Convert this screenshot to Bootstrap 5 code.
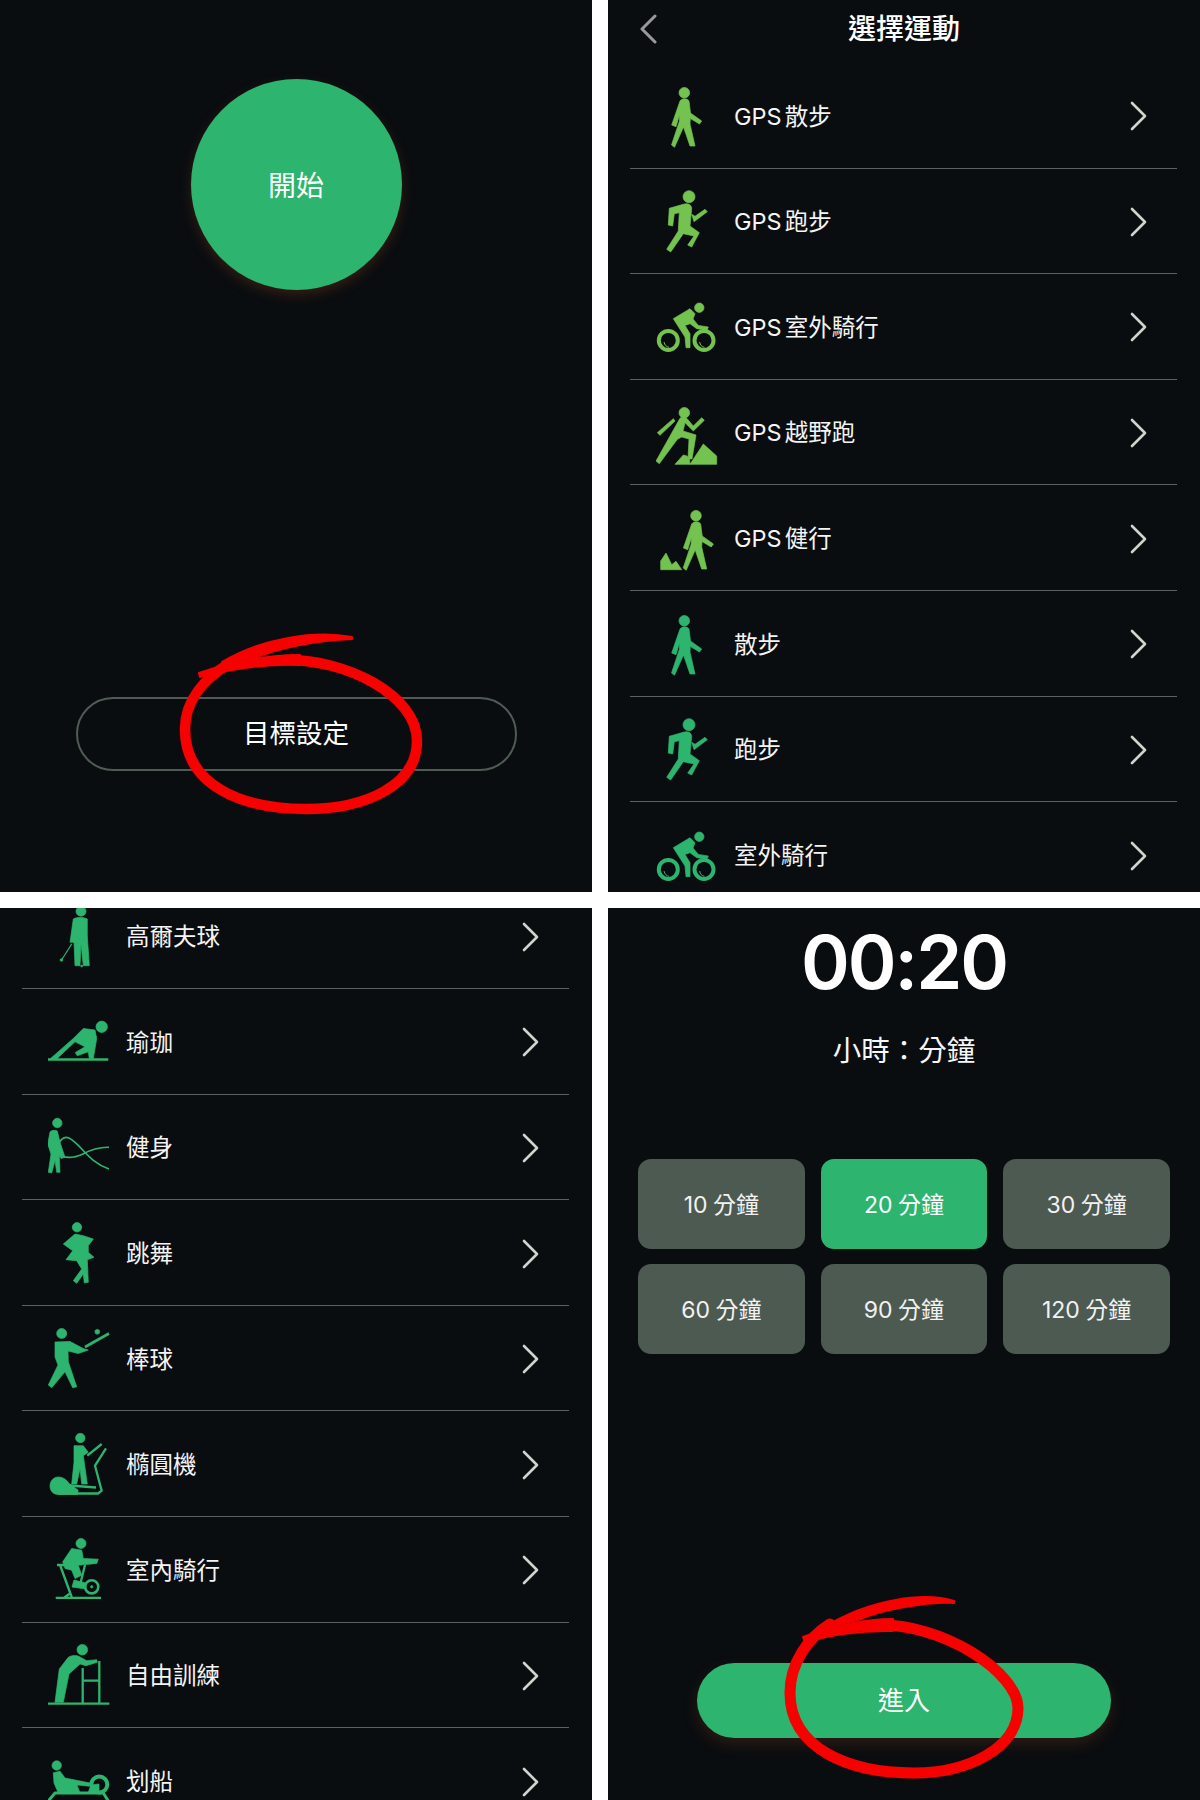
<!DOCTYPE html>
<html lang="zh-Hant">
<head>
<meta charset="utf-8">
<title>選擇運動</title>
<link href="https://cdn.jsdelivr.net/npm/bootstrap@5.3.0/dist/css/bootstrap.min.css" rel="stylesheet">
<style>
body{background:#fff;margin:0;font-family:Inter,"Noto Sans CJK TC",sans-serif}
.sheet{display:grid;grid-template-columns:592px 592px;grid-template-rows:892px 892px;gap:16px;width:1200px;height:1800px}
.phone{background:#0a0d10;color:#f4f4f4;overflow:hidden;position:relative}
.start-disc{width:211px;height:211px;margin:79px auto 0;padding-top:3px;background:#2db46e;color:#fff;font-size:28px;border-radius:50%;box-shadow:0 5px 12px rgba(130,60,30,.35)}
.goal-btn{display:block;width:441px;height:74px;margin:407px auto 0;border:2.5px solid #4f5b54;border-radius:37px;color:#fff;font-size:26.5px;background:transparent;padding:0}
.scribble{position:absolute;top:0;left:0;width:592px;height:892px;pointer-events:none}
.scribble path{fill:none;stroke:#f60000;stroke-linecap:round;stroke-linejoin:round}
.scribble path.sliver{fill:#f60000;stroke-width:2}
.top-head{display:grid;grid-template-columns:1fr auto 1fr;align-items:center;height:58px;margin-bottom:5px;padding:0 32px}
.top-title{font-size:28px;font-weight:500;color:#fff;line-height:1}
.sport-list{margin:0 23px 0 22px;background:transparent;border-radius:0}
.sport-list.shifted{margin-top:-24.5px}
.sport-item{height:105.6px;padding:2px 30px 0 26px;background:transparent;color:#f4f4f4;border:0;border-bottom:1.5px solid #5d6062;font-size:23.5px;gap:14px;word-spacing:-3.5px}
.sport-item.tail{border-bottom:0}
.gps{color:#74c24f}
.plain{color:#2db46e}
.sport-ico{width:64px;height:64px;flex:none;overflow:visible;stroke:currentColor;stroke-width:.7;stroke-linejoin:round}
.chev{width:17px;height:30px;flex:none;fill:none;stroke:#cdd5cd;stroke-width:2.6;stroke-linecap:round;stroke-linejoin:round}
.back-chev{stroke:#999;stroke-width:3}
.clock{margin-top:11px;text-align:center;font-size:74px;font-weight:600;color:#fff;line-height:78px;padding-top:4px;letter-spacing:-2px}
.clock-note{text-align:center;font-size:28.5px;margin-top:30px;line-height:40px;color:#f6f6f6}
.min-grid{display:grid;grid-template-columns:repeat(3,1fr);gap:15px 16px;margin:87.5px 30px 0}
.min-btn{height:90px;background:#4d5a52;color:#f2f2f2;font-size:23px;border:0;border-radius:13px;padding:4px 0 0;word-spacing:-1px}
.min-btn.on{background:#2db46e;color:#fff}
.enter-btn{display:block;width:414px;height:75px;margin:309px auto 0;background:#2db46e;color:#fff;border:0;border-radius:38px;font-size:26px;padding:0;box-shadow:0 6px 14px rgba(130,60,30,.3)}
</style>
</head>
<body>
<svg width="0" height="0" class="position-absolute">
<defs>
<symbol id="i-walk" viewBox="0 0 64 64"><circle cx="28.3" cy="8.7" r="5.3"/><path d="M24 17C26 14 31 14 33 17L34.5 29 45.7 37 43.5 40 34.3 34.5 34 40 39 62H34L27.5 43 18.5 63.3 15.5 61 23.5 37V31L20 42.7 15.7 41Z"/></symbol>
<symbol id="i-run" viewBox="0 0 64 64"><circle cx="33" cy="6.7" r="6"/><path d="M27.3 14.3 13.3 18.3 12.3 35 16.7 36 18.3 23.7 23.3 22.7 22.3 41 10.7 59.3 14.7 62 27.3 43.7 38 46 31.7 55 35.7 57 43.3 42.7 34 36 35.7 18C35 14 31 13 27.3 14.3Z"/><path d="M35.7 24.3 38 31.7 51.3 21.7 49 19.3 39 26.3Z"/></symbol>
<symbol id="i-bike" viewBox="0 0 64 64"><circle cx="43.3" cy="12.7" r="4.7"/><circle cx="12.3" cy="45.4" r="9.5" fill="none" stroke-width="4"/><circle cx="48" cy="45.4" r="9.5" fill="none" stroke-width="4"/><path d="M8 47C8.5 50 10.5 52 13 52.3M43.6 47C44 50 46 52 48.5 52.3" fill="none" stroke-width="1"/><path d="M17.3 23.7 34 13.7 39 18.7 37 24 42.3 30.4 52.3 32 51 35 40.7 33.7 34 28.7 29 30.4 34 38.7V52.7H30L29 42Z"/></symbol>
<symbol id="i-trail" viewBox="0 0 64 64"><circle cx="28.3" cy="11.7" r="5.3"/><path d="M24 17.3 0 60 3.3 62.7 21.3 38.3 25.7 36 33 38 32 58 36 58 40 34 27 30 29 21.7 37.3 30 48.3 19.3 45.7 16.7 37.3 25 30.7 17.3C28 15.5 26 15.5 24 17.3Z"/><path d="M1.3 31.7 4 34.3 19 20 17.3 17.7Z"/><path d="M19 63.3 27.3 54 31 55 33.5 58.5 34 63.3ZM34 63.3 47.3 43 60.7 55V63.3Z"/></symbol>
<symbol id="i-hike" viewBox="0 0 64 64"><circle cx="40" cy="8.7" r="5.3"/><path d="M35.7 17C37.7 14 42.7 14 44.7 17L46.2 29 57.4 37 55.2 40 46 34.5 45.7 40 50.7 62H45.7L39.2 43 30.2 63.3 27.2 61 35.2 37V31L31.7 42.7 27.4 41Z"/><path d="M4.7 62.7V54L10 46 15.7 57.7 20 54.3 25.7 62.7Z"/></symbol>
<symbol id="i-golf" viewBox="0 0 64 64"><circle cx="33" cy="6.3" r="5"/><path d="M25.3 14C28 12 36 12 39.3 14L39.3 30.7 41.3 60.7H35.3L33 39 32 60.7H27L26 37.3H22Z"/><path d="M23.7 39 13.7 54.7" fill="none" stroke-width="1.2"/><circle cx="13.4" cy="55" r="1.3"/><circle cx="33.7" cy="61" r="1"/></symbol>
<symbol id="i-yoga" viewBox="0 0 64 64"><circle cx="53.7" cy="16.8" r="5.7"/><path d="M-.7 49.5H60.3" fill="none" stroke-width="2.4"/><path d="M25.3 28.5 35.3 18.5 47 20 48.7 28.5 45.3 48.5H41.3L40.3 41.8 29.3 45.8 27.3 42.5 37 36.8 27 31.8 8.7 49H2Z"/></symbol>
<symbol id="i-gym" viewBox="0 0 64 64"><circle cx="9.3" cy="7" r="4.7"/><path d="M2 16C3 14 8 14 9.3 15L12 26.3 17 41.3 13 42.5 11.3 39.7 12 56.3H8.7L7 44.7 3.7 57 .3 56.3 3 38-.3 28Z"/><path d="M10.3 28C13 23 17 20 21 22 33 28 40 46 61 53M13.7 39.7C18 42 26 42 35 38 44 33 52 31 61 31.3" fill="none" stroke-width="1.7"/></symbol>
<symbol id="i-dance" viewBox="0 0 64 64"><circle cx="29" cy="5.3" r="4.7"/><path d="M15.3 22 27 12 35.3 13.7 45.3 17 40.3 23.7V30.3L46 35.3 39.3 37.7 40.3 60.3 36.3 61 35.3 52 28.7 61.3 25.3 58.7 33.7 47 28.7 38.7 18 37.7 24.7 28.7Z"/></symbol>
<symbol id="i-base" viewBox="0 0 64 64"><circle cx="13.7" cy="6.5" r="5"/><circle cx="49.3" cy="4.8" r="2.4"/><path d="M37 20 61 6.5" fill="none" stroke-width="2.6"/><path d="M7 15 22 14.5 35.3 21.5 40.3 23 30.3 26.5 20 24 20.3 34.8 28.7 59.8 24.7 60.8 17 44.8 3.7 60.8.3 58 10 38 7 30Z"/></symbol>
<symbol id="i-ellip" viewBox="0 0 64 64"><circle cx="32.3" cy="5" r="4.7"/><path d="M26 12.7 35.3 12.7 40.3 19.3 35.3 22.7 39.3 51H33.7L32 36 28.7 51H23.7L26 29.3Z"/><path d="M53.7 11 39.3 22.7M58 15.3 47 32.7 53.7 57.7 50 60.5H10M22 52.5 48 54.5" fill="none" stroke-width="2.3"/><path d="M10.3 44C15 44 19 47 21 50.5L30 57V61.5H10.3C5.5 61.5 2 58 2 53S5.5 44 10.3 44Z"/></symbol>
<symbol id="i-spin" viewBox="0 0 64 64"><circle cx="33" cy="5.5" r="5"/><path d="M14.7 23.8 23.7 10.5 33.7 12.2 35.3 20.5 50.3 21.2 48.7 25.5 30.3 27.2 33.7 37.2 27 40.5 23.7 32.2 17 30.5Z"/><circle cx="43.7" cy="48.8" r="6.6" fill="none" stroke-width="2.6"/><circle cx="43.7" cy="48.8" r="1.2"/><path d="M7.7 59.8H53M12 27 23.7 59M37 27 32 47M22 55.5 16 59.8M9 27H17" fill="none" stroke-width="2.3"/><path d="M26 42 38 45V51L24 49Z"/></symbol>
<symbol id="i-free" viewBox="0 0 64 64"><circle cx="34.3" cy="5.7" r="5.3"/><path d="M20.3 13.3C24 11 29 11 32 13L38.7 16.7 48.7 15.7 49.3 18.3 38 21.7 32 20 21 30 15.3 58.3H7L11.3 25Z"/><path d="M-.7 59.7H61.3M34.7 24V59M51.3 17V59M34.7 36.7H51.3" fill="none" stroke-width="2.3"/></symbol>
<symbol id="i-row" viewBox="0 0 64 64"><circle cx="8.7" cy="15.5" r="4.7"/><path d="M5.3 22.8 12 21.2 17 28 42 33 41.3 36.2 29 35 32 43H10.3L6 33Z"/><circle cx="51.3" cy="34.5" r="8" fill="none" stroke-width="4"/><path d="M43 35 51 34V43H40Z"/><path d="M.3 51 7 43H55.3L60.3 51" fill="none" stroke-width="3"/></symbol>
<symbol id="i-next" viewBox="0 0 17 30"><path d="M2 2 15 15 2 28"/></symbol>
</defs>
</svg>

<main class="sheet">
  <section class="phone">
    <div class="start-disc d-flex align-items-center justify-content-center">開始</div>
    <button class="btn goal-btn" type="button">目標設定</button>
    <svg class="scribble" viewBox="0 0 592 892" aria-hidden="true">
      <path class="sliver" d="M199 673C225 664 262 655 300 655L300 665C262 663 228 670 200 677Z"/>
      <path stroke-width="10.5" d="M285 660C346 659 417 695 417 741 417 785 366 809 306 809 241 809 185 785 185 729 185 700 205 678 230 663"/>
      <path class="sliver" d="M352 637C315 630 262 638 222 662L248 661C275 648 318 640 352 639Z"/>
    </svg>
  </section>

  <section class="phone">
    <header class="top-head">
      <svg class="chev back-chev" viewBox="0 0 17 30"><path d="M15 2 2 15 15 28"/></svg>
      <div class="top-title">選擇運動</div>
      <span></span>
    </header>
    <div class="list-group list-group-flush sport-list">
      <div class="list-group-item sport-item d-flex align-items-center"><svg class="sport-ico gps" fill="currentColor"><use href="#i-walk"/></svg><span class="flex-grow-1">GPS 散步</span><svg class="chev"><use href="#i-next"/></svg></div>
      <div class="list-group-item sport-item d-flex align-items-center"><svg class="sport-ico gps" fill="currentColor"><use href="#i-run"/></svg><span class="flex-grow-1">GPS 跑步</span><svg class="chev"><use href="#i-next"/></svg></div>
      <div class="list-group-item sport-item d-flex align-items-center"><svg class="sport-ico gps" fill="currentColor"><use href="#i-bike"/></svg><span class="flex-grow-1">GPS 室外騎行</span><svg class="chev"><use href="#i-next"/></svg></div>
      <div class="list-group-item sport-item d-flex align-items-center"><svg class="sport-ico gps" fill="currentColor"><use href="#i-trail"/></svg><span class="flex-grow-1">GPS 越野跑</span><svg class="chev"><use href="#i-next"/></svg></div>
      <div class="list-group-item sport-item d-flex align-items-center"><svg class="sport-ico gps" fill="currentColor"><use href="#i-hike"/></svg><span class="flex-grow-1">GPS 健行</span><svg class="chev"><use href="#i-next"/></svg></div>
      <div class="list-group-item sport-item d-flex align-items-center"><svg class="sport-ico plain" fill="currentColor"><use href="#i-walk"/></svg><span class="flex-grow-1">散步</span><svg class="chev"><use href="#i-next"/></svg></div>
      <div class="list-group-item sport-item d-flex align-items-center"><svg class="sport-ico plain" fill="currentColor"><use href="#i-run"/></svg><span class="flex-grow-1">跑步</span><svg class="chev"><use href="#i-next"/></svg></div>
      <div class="list-group-item sport-item tail d-flex align-items-center"><svg class="sport-ico plain" fill="currentColor"><use href="#i-bike"/></svg><span class="flex-grow-1">室外騎行</span><svg class="chev"><use href="#i-next"/></svg></div>
    </div>
  </section>

  <section class="phone">
    <div class="list-group list-group-flush sport-list shifted">
      <div class="list-group-item sport-item d-flex align-items-center"><svg class="sport-ico plain" fill="currentColor"><use href="#i-golf"/></svg><span class="flex-grow-1">高爾夫球</span><svg class="chev"><use href="#i-next"/></svg></div>
      <div class="list-group-item sport-item d-flex align-items-center"><svg class="sport-ico plain" fill="currentColor"><use href="#i-yoga"/></svg><span class="flex-grow-1">瑜珈</span><svg class="chev"><use href="#i-next"/></svg></div>
      <div class="list-group-item sport-item d-flex align-items-center"><svg class="sport-ico plain" fill="currentColor"><use href="#i-gym"/></svg><span class="flex-grow-1">健身</span><svg class="chev"><use href="#i-next"/></svg></div>
      <div class="list-group-item sport-item d-flex align-items-center"><svg class="sport-ico plain" fill="currentColor"><use href="#i-dance"/></svg><span class="flex-grow-1">跳舞</span><svg class="chev"><use href="#i-next"/></svg></div>
      <div class="list-group-item sport-item d-flex align-items-center"><svg class="sport-ico plain" fill="currentColor"><use href="#i-base"/></svg><span class="flex-grow-1">棒球</span><svg class="chev"><use href="#i-next"/></svg></div>
      <div class="list-group-item sport-item d-flex align-items-center"><svg class="sport-ico plain" fill="currentColor"><use href="#i-ellip"/></svg><span class="flex-grow-1">橢圓機</span><svg class="chev"><use href="#i-next"/></svg></div>
      <div class="list-group-item sport-item d-flex align-items-center"><svg class="sport-ico plain" fill="currentColor"><use href="#i-spin"/></svg><span class="flex-grow-1">室內騎行</span><svg class="chev"><use href="#i-next"/></svg></div>
      <div class="list-group-item sport-item d-flex align-items-center"><svg class="sport-ico plain" fill="currentColor"><use href="#i-free"/></svg><span class="flex-grow-1">自由訓練</span><svg class="chev"><use href="#i-next"/></svg></div>
      <div class="list-group-item sport-item tail d-flex align-items-center"><svg class="sport-ico plain" fill="currentColor"><use href="#i-row"/></svg><span class="flex-grow-1">划船</span><svg class="chev"><use href="#i-next"/></svg></div>
    </div>
  </section>

  <section class="phone">
    <div class="clock">00:20</div>
    <div class="clock-note">小時：分鐘</div>
    <div class="min-grid">
      <button class="btn min-btn" type="button">10 分鐘</button>
      <button class="btn min-btn on" type="button">20 分鐘</button>
      <button class="btn min-btn" type="button">30 分鐘</button>
      <button class="btn min-btn" type="button">60 分鐘</button>
      <button class="btn min-btn" type="button">90 分鐘</button>
      <button class="btn min-btn" type="button">120 分鐘</button>
    </div>
    <button class="btn enter-btn" type="button">進入</button>
    <svg class="scribble" viewBox="0 0 592 892" aria-hidden="true">
      <path class="sliver" d="M195 729C220 720 250 711 285 711L285 723C250 722 222 727 197 734Z"/>
      <path stroke-width="11" d="M265 717C335 714 410 765 410 800 410 840 360 865 306 865 240 865 182 840 182 785 182 755 200 730 222 716"/>
      <path class="sliver" d="M346 693C318 684 262 690 215 720L250 712C272 702 320 693 346 695Z"/>
    </svg>
  </section>
</main>
<script src="https://cdn.jsdelivr.net/npm/bootstrap@5.3.0/dist/js/bootstrap.bundle.min.js"></script>
</body>
</html>
